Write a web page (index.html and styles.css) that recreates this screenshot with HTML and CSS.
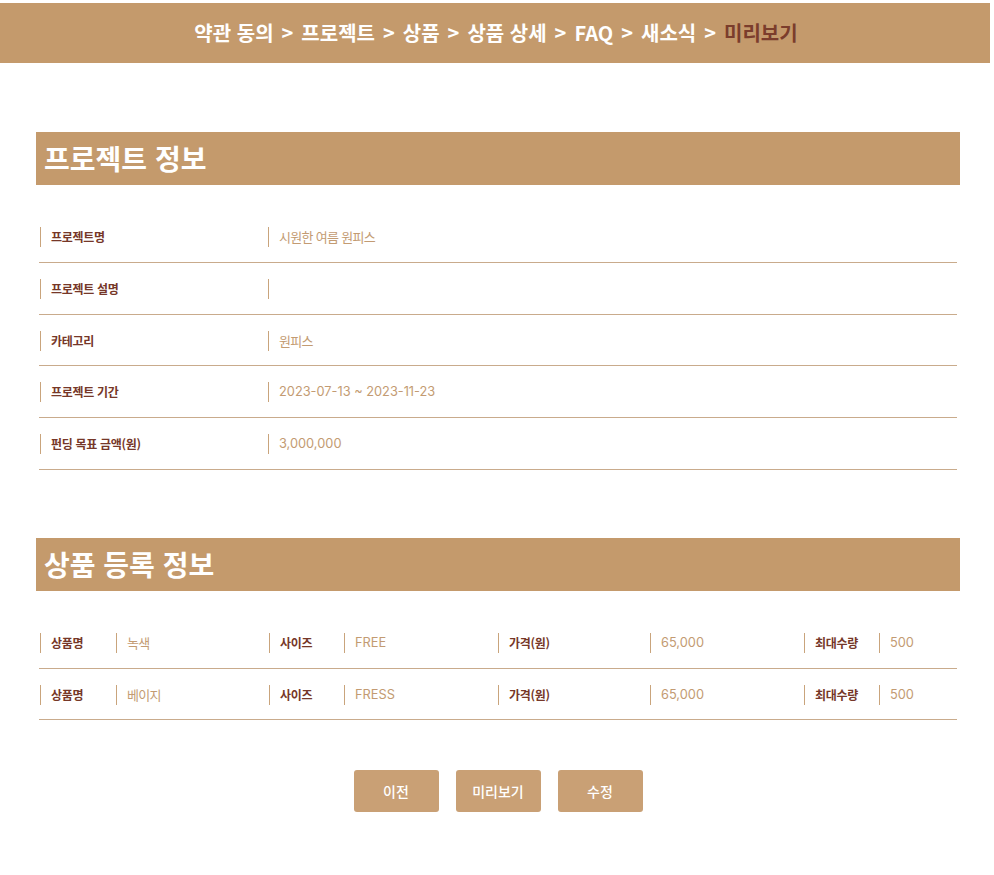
FILE: index.html
```html
<!DOCTYPE html>
<html lang="ko">
<head>
<meta charset="utf-8">
<title>미리보기</title>
<link rel="stylesheet" href="styles.css">
</head>
<body>
<div class="page">
  <header class="steps">
    <span>약관 동의</span><span class="sep">&gt;</span><span>프로젝트</span><span class="sep">&gt;</span><span>상품</span><span class="sep">&gt;</span><span>상품 상세</span><span class="sep">&gt;</span><span>FAQ</span><span class="sep">&gt;</span><span>새소식</span><span class="sep">&gt;</span><span class="current">미리보기</span>
  </header>

  <main class="content">
    <section class="section">
      <h2 class="section-title">프로젝트 정보</h2>
      <div class="info-table">
        <div class="row info-row"><div class="cell label">프로젝트명</div><div class="cell value">시원한 여름 원피스</div></div>
        <div class="row info-row"><div class="cell label">프로젝트 설명</div><div class="cell value"></div></div>
        <div class="row info-row"><div class="cell label">카테고리</div><div class="cell value">원피스</div></div>
        <div class="row info-row"><div class="cell label">프로젝트 기간</div><div class="cell value num">2023-07-13 ~ 2023-11-23</div></div>
        <div class="row info-row"><div class="cell label">펀딩 목표 금액(원)</div><div class="cell value num">3,000,000</div></div>
      </div>
    </section>

    <section class="section">
      <h2 class="section-title">상품 등록 정보</h2>
      <div class="info-table">
        <div class="row product-row">
          <div class="cell label">상품명</div><div class="cell value">녹색</div>
          <div class="cell label">사이즈</div><div class="cell value num">FREE</div>
          <div class="cell label">가격(원)</div><div class="cell value num">65,000</div>
          <div class="cell label">최대수량</div><div class="cell value num">500</div>
        </div>
        <div class="row product-row">
          <div class="cell label">상품명</div><div class="cell value">베이지</div>
          <div class="cell label">사이즈</div><div class="cell value num">FRESS</div>
          <div class="cell label">가격(원)</div><div class="cell value num">65,000</div>
          <div class="cell label">최대수량</div><div class="cell value num">500</div>
        </div>
      </div>
    </section>

    <div class="actions">
      <button class="btn" type="button">이전</button>
      <button class="btn" type="button">미리보기</button>
      <button class="btn" type="button">수정</button>
    </div>
  </main>
</div>
</body>
</html>
```

FILE: styles.css
```css
* { box-sizing: border-box; }

body {
  margin: 0;
  background: #ffffff;
  font-family: Inter, "Noto Sans CJK KR", sans-serif;
}

.page {
  padding-top: 3px;
  padding-bottom: 60px;
}

.steps {
  width: 990px;
  height: 60px;
  background: #c49a6c;
  display: flex;
  justify-content: center;
  align-items: center;
  color: #ffffff;
  font-family: "Noto Sans CJK KR", sans-serif;
  font-weight: 700;
  font-size: 20px;
  letter-spacing: 0;
  padding-left: 2px;
  padding-bottom: 2px;
}

.steps .sep {
  margin: 0 8px;
}

.steps .current {
  color: #7b3d2c;
}

.content {
  width: 924px;
  margin-left: 36px;
}

.section {
  margin-top: 69px;
}

.section + .section {
  margin-top: 68px;
}

.section-title {
  margin: 0;
  height: 53px;
  line-height: 52px;
  padding-left: 8px;
  background: #c49a6c;
  color: #ffffff;
  font-family: "Noto Sans CJK KR", sans-serif;
  font-size: 28px;
  font-weight: 700;
  letter-spacing: 0;
}

.info-table {
  margin: 26px 3px 0;
}

.row {
  display: grid;
  padding: 16px 0 14.75px 1px;
  border-bottom: 1px solid #c9ab8c;
}

.info-row {
  grid-template-columns: 228px 1fr;
}

.product-row {
  grid-template-columns: 76px 153px 75px 154px 152px 154px 75px 1fr;
}

.cell {
  height: 20px;
  line-height: 20px;
  border-left: 1px solid #c9a47c;
  padding-left: 10px;
  white-space: nowrap;
}

.label {
  color: #763728;
  font-family: "Noto Sans CJK KR", sans-serif;
  font-weight: 700;
  font-size: 12px;
  letter-spacing: -0.3px;
}

.value {
  color: #c39b72;
  font-family: "Noto Sans CJK KR", sans-serif;
  font-size: 13px;
  letter-spacing: -0.7px;
}

.value.num {
  font-family: Inter, "Noto Sans CJK KR", sans-serif;
  font-size: 12.8px;
  letter-spacing: 0;
}

.actions {
  margin-top: 50px;
  display: flex;
  justify-content: center;
  gap: 17px;
}

.btn {
  width: 85px;
  height: 42px;
  border: 0;
  border-radius: 3px;
  background: #c9a075;
  color: #ffffff;
  font-family: "Noto Sans CJK KR", sans-serif;
  font-size: 14px;
  font-weight: 500;
  padding: 0;
}
```
